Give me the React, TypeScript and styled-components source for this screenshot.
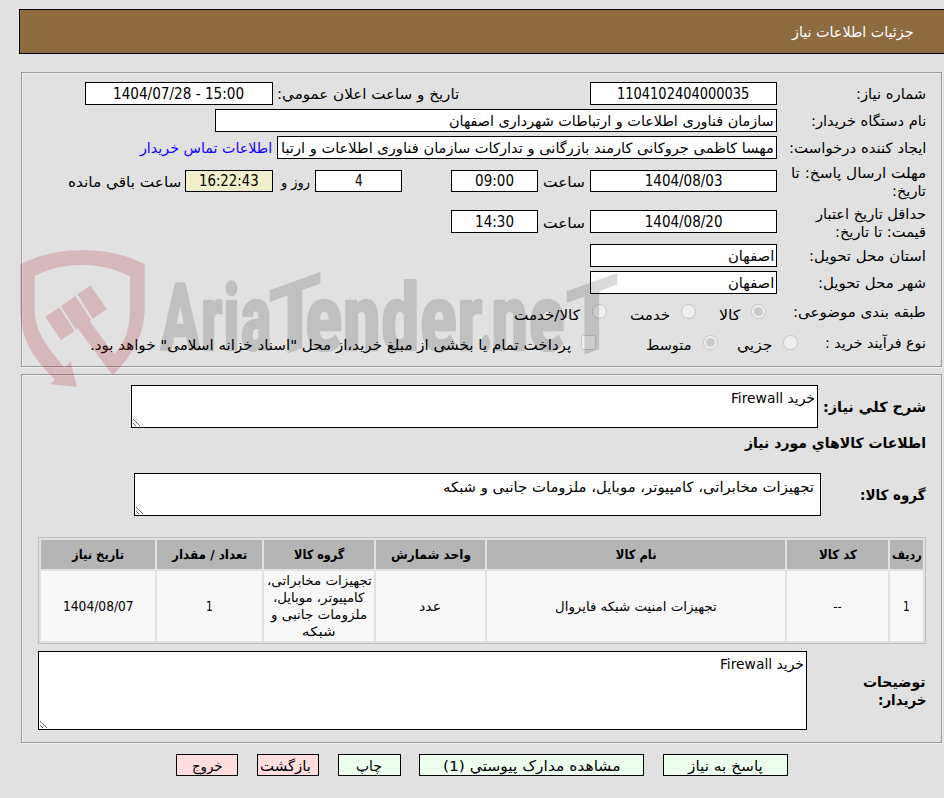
import React, { useLayoutEffect, useRef, useState } from 'react';
import styled, { createGlobalStyle } from 'styled-components';

const Global = createGlobalStyle`
  *, *::before, *::after { box-sizing: border-box; }
  html, body { margin: 0; background: #e1e1e1; overflow: hidden; }
  body { color: #000; font-family: "DejaVu Sans Condensed", "DejaVu Sans", sans-serif; font-stretch: condensed; font-size: 14.3px; line-height: 18px; }
`;

const Page = styled.main`
  position: relative;
  width: 944px;
  height: 798px;
  padding-top: 9px;
  overflow: hidden;
`;

const TitleBar = styled.header`
  display: flex;
  align-items: center;
  height: 45px;
  margin-left: 19px;
  padding-right: 31px;
  border: 1px solid #000;
  border-right: 0;
  background: #8f6c40;
  color: #fff;
`;

const Panel = styled.section<{ $top: number; $height: number }>`
  width: 921px;
  height: ${p => p.$height}px;
  margin: ${p => p.$top}px 2px 0 0;
  padding: 6px 15px 0 14px;
  border: 1px solid #999;
  box-shadow: inset 1px 1px #f0f0f0, 1px 1px #f0f0f0;
`;

const Row = styled.div<{ $h: number; $top?: number }>`
  display: flex;
  align-items: center;
  height: ${p => p.$h}px;
  margin-top: ${p => p.$top ?? 0}px;
`;

const Label = styled.label<{ $w?: number; $gap?: number; $bold?: boolean; $drop?: number }>`
  flex: none;
  display: flex;
  flex-direction: column;
  width: ${p => (p.$w ? `${p.$w}px` : 'auto')};
  margin-right: ${p => p.$gap ?? 0}px;
  padding-top: ${p => p.$drop ?? 0}px;
  font-weight: ${p => (p.$bold ? 700 : 400)};
`;

const Field = styled.div<{ $w: number; $h?: number; $gap?: number; $start?: boolean; $tint?: boolean }>`
  flex: none;
  display: flex;
  align-items: center;
  justify-content: ${p => (p.$start ? 'flex-start' : 'center')};
  width: ${p => p.$w}px;
  height: ${p => p.$h ?? 23}px;
  margin-right: ${p => p.$gap ?? 0}px;
  padding: 0 2px;
  border: 1px solid #000;
  background: ${p => (p.$tint ? '#f0eecb' : '#fff')};
  overflow: hidden;
`;

const Link = styled.a`
  margin-right: 5px;
  color: #1400ff;
`;

const Choice = styled.input<{ $gap: number }>`
  flex: none;
  width: 15px;
  height: 15px;
  margin: 0 ${p => p.$gap}px 0 0;
`;

const Area = styled.div<{ $w: number; $h: number; $gap: number; $pad?: string }>`
  flex: none;
  width: ${p => p.$w}px;
  height: ${p => p.$h}px;
  margin-right: ${p => p.$gap}px;
  padding: ${p => p.$pad ?? '3px 2px'};
  border: 1px solid #000;
  background: #fff;
  resize: both;
  overflow: hidden;
`;

const Heading = styled.h2`
  margin: 0;
  font-size: 14.3px;
  line-height: 18px;
  font-weight: 700;
`;

const Grid = styled.div`
  flex: none;
  display: grid;
  grid-template-columns: 33px 101px 298px 109px 110px 105px 114px;
  grid-template-rows: 29px 70px;
  gap: 2px;
  width: 888px;
  height: 107px;
  padding: 2px;
  border: 1px solid #bfbfbf;
  font-size: 12.8px;
  line-height: 17px;
`;

const Cell = styled.div<{ $head?: boolean }>`
  display: flex;
  flex-direction: column;
  align-items: center;
  justify-content: center;
  background: ${p => (p.$head ? '#b5b5b5' : '#f7f7f7')};
  font-weight: ${p => (p.$head ? 700 : 400)};
`;

const Actions = styled.footer`
  display: flex;
  gap: 18.7px;
  margin: 11px 156px 0 0;
`;

const Action = styled.button<{ $w: number; $red?: boolean; $shift?: number }>`
  display: flex;
  align-items: center;
  justify-content: center;
  flex: none;
  width: ${p => p.$w}px;
  height: 22px;
  padding: 1px ${p => p.$shift ?? 0}px 0 0;
  border: 1px solid #000;
  background: ${p => (p.$red ? '#ffdddd' : '#edffed')};
  color: #000;
  font: inherit;
`;

const Slot = styled.span<{ $w: number }>`
  display: block;
  flex: none;
  width: ${p => p.$w}px;
  text-align: right;
  white-space: nowrap;
`;

const Ink = styled.span<{ $ltr?: boolean }>`
  display: inline-block;
  direction: ${p => (p.$ltr ? 'ltr' : 'rtl')};
  font-size: ${p => (p.$ltr ? '1.05em' : '1em')};
  transform-origin: right center;
`;

/* Keeps a line of text at a set width whatever face the system supplies. */
function Fit({ w, ltr, children }: { w: number; ltr?: boolean; children: React.ReactNode }) {
  const ref = useRef<HTMLSpanElement>(null);
  const [scale, setScale] = useState(1);
  useLayoutEffect(() => {
    if (ref.current) setScale(w / ref.current.offsetWidth);
  }, [w]);
  return (
    <Slot $w={w}>
      <Ink ref={ref} $ltr={ltr} style={{ transform: `scaleX(${scale})` }}>{children}</Ink>
    </Slot>
  );
}

const Mark = styled.svg`
  position: absolute;
  left: 0;
  top: 230px;
  pointer-events: none;
`;

function Watermark() {
  return (
    <Mark width="640" height="170" viewBox="0 230 640 170" direction="ltr">
      <g transform="translate(10 230) scale(.33333)" fill="rgb(170,25,35)" opacity=".2">
        <path d="M31 103Q115 60 217 60Q322 60 404 103V230C404 330 355 385 308 436L204 296L196 297L153 229L196 197L243 269L240 275L313 373C345 335 360 300 360 230V138Q290 105 217 104Q140 104 74 138V235C74 305 110 350 164 413L182 394L201 470L121 463L135 448C70 385 31 330 31 230Z" />
        <path d="M106 260L148 232L194 303L153 331ZM202 193L242 167L290 238L248 266Z" />
      </g>
      <g fill="#000" stroke="#000" strokeWidth="2.5" strokeLinejoin="round" opacity=".14" fontFamily="Roboto" fontWeight="700" fontSize="92">
        <text x="160" y="350" textLength="112" lengthAdjust="spacingAndGlyphs">Aria</text>
        <text transform="translate(267 361) skewY(-20)" x="0" y="0" textLength="56" lengthAdjust="spacingAndGlyphs" fontSize="98" strokeWidth="0">T</text>
        <text x="305" y="350" textLength="178" lengthAdjust="spacingAndGlyphs">ender</text>
        <text x="479" y="350" textLength="14" lengthAdjust="spacingAndGlyphs">.</text>
        <text x="491" y="350" textLength="74" lengthAdjust="spacingAndGlyphs">ne</text>
        <text transform="translate(564 362) skewY(-20)" x="0" y="0" textLength="56" lengthAdjust="spacingAndGlyphs" fontSize="98" strokeWidth="0">T</text>
      </g>
    </Mark>
  );
}

const columns: [string, number][] = [
  ['ردیف', 30], ['کد کالا', 38], ['نام کالا', 41], ['واحد شمارش', 80],
  ['گروه کالا', 50], ['تعداد / مقدار', 75], ['تاریخ نیاز', 52],
];

export default function App() {
  return (
    <Page dir="rtl">
      <Global />
      <TitleBar><Fit w={122}>جزئیات اطلاعات نیاز</Fit></TitleBar>

      <Panel $top={18} $height={295}>
        <Row $h={27} $top={1}>
          <Label $w={149}><Fit w={70}>شماره نیاز:</Fit></Label>
          <Field $w={187}><Fit w={132} ltr>1104102404000035</Fit></Field>
          <Label $w={186} $gap={131}><Fit w={182}>تاریخ و ساعت اعلان عمومي:</Fit></Label>
          <Field $w={188}><Fit w={131} ltr>1404/07/28 - 15:00</Fit></Field>
        </Row>
        <Row $h={27}>
          <Label $w={149}><Fit w={115}>نام دستگاه خریدار:</Fit></Label>
          <Field $w={562} $start><Fit w={325}>سازمان فناوری اطلاعات و ارتباطات شهرداری اصفهان</Fit></Field>
        </Row>
        <Row $h={27}>
          <Label $w={149}><Fit w={138}>ایجاد کننده درخواست:</Fit></Label>
          <Field $w={500} $start><Fit w={493}>مهسا کاظمی جروکانی کارمند بازرگانی و تدارکات سازمان فناوری اطلاعات و ارتبا</Fit></Field>
          <Link><Fit w={132}>اطلاعات تماس خریدار</Fit></Link>
        </Row>
        <Row $h={40}>
          <Label $w={149} $drop={1}><Fit w={135}>مهلت ارسال پاسخ: تا</Fit><Fit w={34}>تاریخ:</Fit></Label>
          <Field $w={187} $h={22}><Fit w={78} ltr>1404/08/03</Fit></Field>
          <Label $w={47} $gap={5} $drop={2}><Fit w={42}>ساعت</Fit></Label>
          <Field $w={87} $h={22}><Fit w={39} ltr>09:00</Fit></Field>
          <Field $w={87} $h={22} $gap={49}><Fit w={8} ltr>4</Fit></Field>
          <Label $w={37} $gap={5} $drop={2}><Fit w={29}>روز و</Fit></Label>
          <Field $w={88} $h={22} $tint><Fit w={60} ltr>16:22:43</Fit></Field>
          <Label $gap={4} $drop={2}><Fit w={113}>ساعت باقي مانده</Fit></Label>
        </Row>
        <Row $h={41}>
          <Label $w={149} $drop={2}><Fit w={110}>حداقل تاریخ اعتبار</Fit><Fit w={91}>قیمت: تا تاریخ:</Fit></Label>
          <Field $w={187}><Fit w={78} ltr>1404/08/20</Fit></Field>
          <Label $w={47} $gap={5} $drop={2}><Fit w={42}>ساعت</Fit></Label>
          <Field $w={87}><Fit w={39} ltr>14:30</Fit></Field>
        </Row>
        <Row $h={27}>
          <Label $w={149}><Fit w={117}>استان محل تحویل:</Fit></Label>
          <Field $w={187} $start><Fit w={46}>اصفهان</Fit></Field>
        </Row>
        <Row $h={27}>
          <Label $w={149}><Fit w={108}>شهر محل تحویل:</Fit></Label>
          <Field $w={187} $start><Fit w={46}>اصفهان</Fit></Field>
        </Row>
        <Row $h={31}>
          <Label $w={149} $drop={1}><Fit w={133}>طبقه بندی موضوعی:</Fit></Label>
          <Choice type="radio" disabled defaultChecked $gap={11} />
          <Label $gap={11} $drop={6}><Fit w={21}>کالا</Fit></Label>
          <Choice type="radio" disabled $gap={23} />
          <Label $gap={11} $drop={6}><Fit w={40}>خدمت</Fit></Label>
          <Choice type="radio" disabled $gap={23} />
          <Label $gap={12} $drop={6}><Fit w={66}>کالا/خدمت</Fit></Label>
        </Row>
        <Row $h={30}>
          <Label $w={128} $drop={1}><Fit w={101}>نوع فرآیند خرید :</Fit></Label>
          <Choice type="radio" disabled $gap={0} />
          <Label $gap={11} $drop={5}><Fit w={35}>جزیي</Fit></Label>
          <Choice type="radio" disabled defaultChecked $gap={19} />
          <Label $gap={12} $drop={5}><Fit w={45}>متوسط</Fit></Label>
          <Choice type="checkbox" disabled $gap={50} />
          <Label $gap={10} $drop={5}><Fit w={481}>پرداخت تمام یا بخشی از مبلغ خرید،از محل "اسناد خزانه اسلامی" خواهد بود.</Fit></Label>
        </Row>
      </Panel>

      <Panel $top={7} $height={369}>
        <Row $h={43} $top={4}>
          <Label $w={103} $bold><Fit w={103}>شرح کلي نیاز:</Fit></Label>
          <Area $w={687} $h={43} $gap={5}><Fit w={84}>خرید Firewall</Fit></Area>
        </Row>
        <Row $h={30}>
          <Heading><Fit w={181}>اطلاعات کالاهاي مورد نیاز</Fit></Heading>
        </Row>
        <Row $h={43} $top={15}>
          <Label $w={105} $bold><Fit w={66}>گروه کالا:</Fit></Label>
          <Area $w={687} $h={43} $gap={0} $pad="4px 6px"><Fit w={371}>تجهیزات مخابراتی، کامپیوتر، موبایل، ملزومات جانبی و شبکه</Fit></Area>
        </Row>
        <Row $h={107} $top={21}>
          <Grid>
            {columns.map(([name, w]) => <Cell key={name} $head><Fit w={w}>{name}</Fit></Cell>)}
            <Cell><Fit w={7} ltr>1</Fit></Cell>
            <Cell>--</Cell>
            <Cell><Fit w={162}>تجهیزات امنیت شبکه فایروال</Fit></Cell>
            <Cell><Fit w={22}>عدد</Fit></Cell>
            <Cell>
              <Fit w={105}>تجهیزات مخابراتی،</Fit>
              <Fit w={91}>کامپیوتر، موبایل،</Fit>
              <Fit w={96}>ملزومات جانبی و</Fit>
              <Fit w={34}>شبکه</Fit>
            </Cell>
            <Cell><Fit w={7} ltr>1</Fit></Cell>
            <Cell><Fit w={71} ltr>1404/08/07</Fit></Cell>
          </Grid>
        </Row>
        <Row $h={79} $top={7}>
          <Label $w={119} $bold><Fit w={63}>توضیحات</Fit><Fit w={49}>خریدار:</Fit></Label>
          <Area $w={769} $h={79} $gap={0}><Fit w={84}>خرید Firewall</Fit></Area>
        </Row>
      </Panel>

      <Actions>
        <Action $w={125}><Fit w={75}>پاسخ به نیاز</Fit></Action>
        <Action $w={225}><Fit w={177}>مشاهده مدارک پیوستي (1)</Fit></Action>
        <Action $w={63}><Fit w={26}>چاپ</Fit></Action>
        <Action $w={62} $red $shift={5}><Fit w={51}>بازگشت</Fit></Action>
        <Action $w={62} $red><Fit w={31}>خروج</Fit></Action>
      </Actions>
      <Watermark />
    </Page>
  );
}
